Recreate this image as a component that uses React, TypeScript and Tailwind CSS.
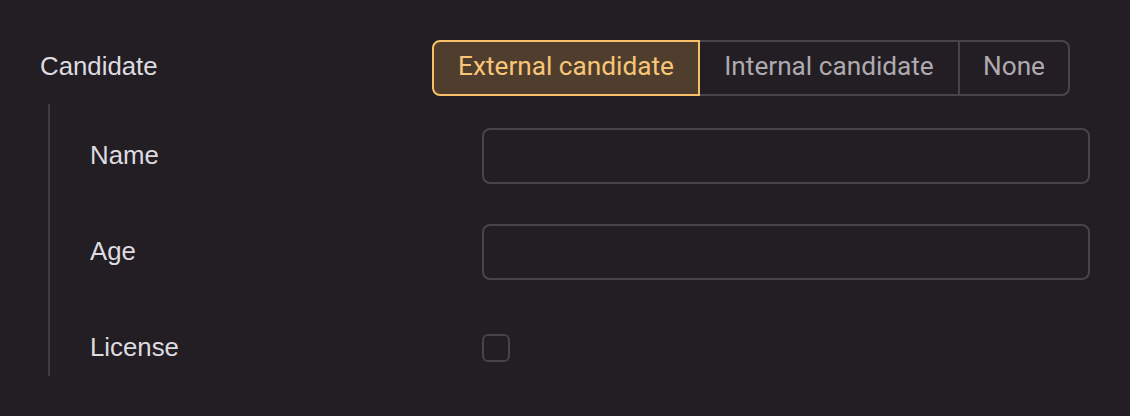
import React, { useState } from "react";

const OPTIONS = [
  { label: "External candidate", w: "w-[268px]" },
  { label: "Internal candidate", w: "w-[262px]" },
  { label: "None", w: "w-[112px]" },
];

function Row({ label, children }: { label: string; children: React.ReactNode }) {
  return (
    <div className="flex h-14 items-center">
      <div className="w-[392px] shrink-0 pb-0.5 text-[25.8px] text-[#dedbe0]">{label}</div>
      <div className="flex flex-1 items-center">{children}</div>
    </div>
  );
}

export default function App() {
  const [kind, setKind] = useState(OPTIONS[0].label);
  const [license, setLicense] = useState(false);

  return (
    <div
      className="h-[416px] w-[1130px] bg-[#221e23] pl-10 pr-10 pt-10"
      style={{ fontFamily: '"Liberation Sans", Arial, sans-serif' }}
    >
      <div className="flex h-14 items-center">
        <div className="w-[392px] shrink-0 pb-1 text-[25.8px] text-[#dedbe0]">Candidate</div>
        <div className="flex h-14 font-['Roboto',sans-serif] text-[26.2px]">
          {OPTIONS.map((o, i) => {
            const active = o.label === kind;
            const shape =
              i === 0 ? "rounded-l-lg" : i === OPTIONS.length - 1 ? "-ml-[2px] rounded-r-lg" : "-ml-[2px]";
            return (
              <button
                key={o.label}
                onClick={() => setKind(o.label)}
                className={`${o.w} ${shape} h-14 border-2 pb-0.5 ${
                  active
                    ? "relative z-10 border-[#f6c166] bg-[#4f3e2e] text-[#f8c676]"
                    : "border-[#48444a] text-[#aeaab0]"
                }`}
              >
                {o.label}
              </button>
            );
          })}
        </div>
      </div>

      <div className="ml-2 mt-2 flex flex-col gap-10 border-l-2 border-[#3f3b41] pl-[40px] pt-6">
        <Row label="Name">
          <input className="h-14 w-full rounded-lg border-2 border-[#48444a] bg-transparent px-4 text-[22px] text-[#dedbe0] outline-none" />
        </Row>
        <Row label="Age">
          <input className="h-14 w-full rounded-lg border-2 border-[#48444a] bg-transparent px-4 text-[22px] text-[#dedbe0] outline-none" />
        </Row>
        <Row label="License">
          <button
            onClick={() => setLicense(!license)}
            className="h-7 w-7 rounded-md border-2 border-[#48444a] bg-transparent"
            aria-pressed={license}
          />
        </Row>
      </div>
    </div>
  );
}
